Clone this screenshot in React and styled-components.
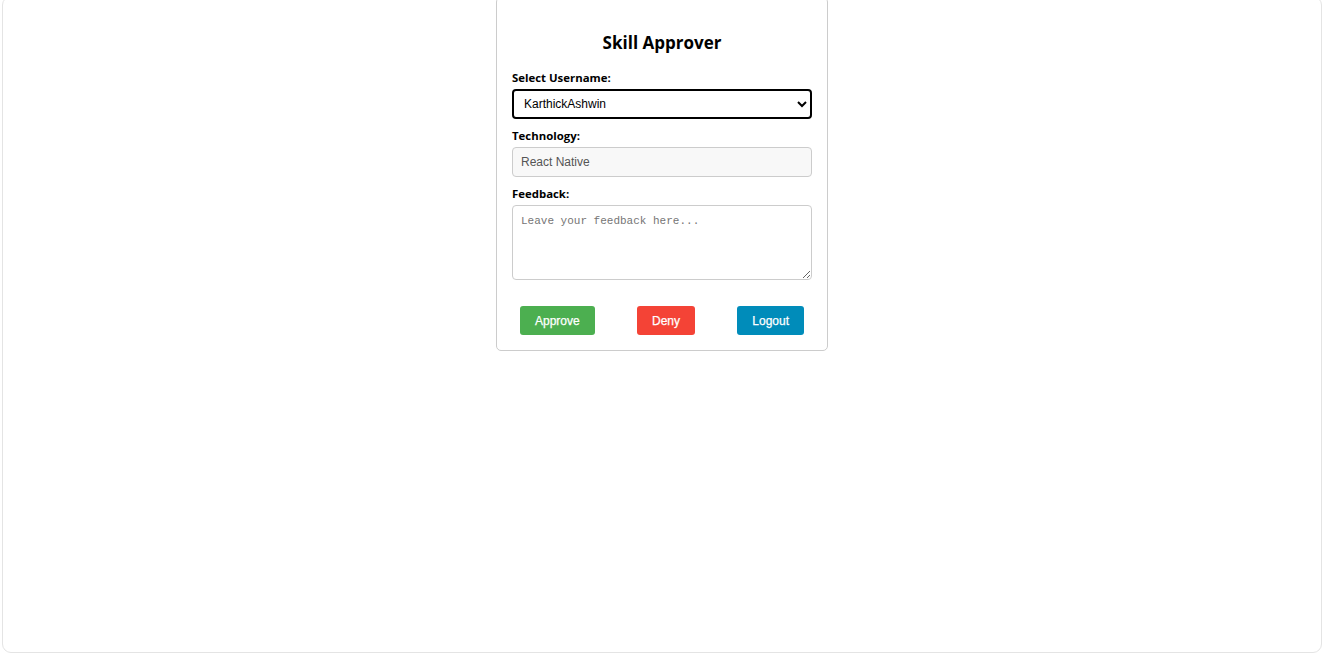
import React, { useState } from "react";
import styled, { createGlobalStyle } from "styled-components";

const Global = createGlobalStyle`
  html, body { margin: 0; padding: 0; background: #ffffff; overflow: hidden; }
  * { box-sizing: border-box; }
`;

const Frame = styled.div`
  margin: -4px 5px 0 2px;
  height: 657px;
  background: #fff;
  border: 1px solid #e4e4e4;
  border-radius: 9px;
  display: flex;
  justify-content: center;
  align-items: flex-start;
`;

const Card = styled.div`
  width: 332px;
  border: 1px solid #cccccc;
  border-radius: 5px;
  padding: 19px 15px 15px;
  background: #fff;
  display: flex;
  flex-direction: column;
`;

const Title = styled.h2`
  margin: 14px 0 14px;
  text-align: center;
  font-family: "Open Sans", "Noto Sans", sans-serif;
  font-size: 17px;
  line-height: 24px;
  font-weight: 700;
  color: #000;
`;

const Label = styled.label`
  font-family: "Open Sans", "Noto Sans", sans-serif;
  font-size: 11.4px;
  font-weight: 700;
  line-height: 16px;
  color: #000;
  padding-top: 1px;
  margin-bottom: 3px;
`;

const Select = styled.select`
  height: 30px;
  width: 100%;
  border: 2px solid #000;
  border-radius: 4px;
  padding: 0 4px 0 6px;
  font-family: "Liberation Sans", Arial, sans-serif;
  font-size: 12px;
  color: #000;
  background: #fff;
  margin-bottom: 8px;
  outline: none;
`;

const Input = styled.input`
  height: 30px;
  width: 100%;
  border: 1px solid #cccccc;
  border-radius: 4px;
  padding: 0 8px;
  background: #f8f8f8;
  font-family: "Liberation Sans", Arial, sans-serif;
  font-size: 12px;
  color: #555;
  margin-bottom: 8px;
`;

const TextArea = styled.textarea`
  height: 75px;
  width: 100%;
  border: 1px solid #cccccc;
  border-radius: 4px;
  padding: 9px 8px 7px;
  font-family: "Liberation Mono", "DejaVu Sans Mono", monospace;
  font-size: 11px;
  resize: vertical;
  &::placeholder { color: #757575; }
`;

const Actions = styled.div`
  display: flex;
  justify-content: space-between;
  padding: 0 8px;
  margin-top: 26px;
`;

const Button = styled.button`
  height: 29px;
  padding: 0 15px;
  border: none;
  border-radius: 3px;
  background: ${(p) => p.$bg};
  color: #fff;
  font-family: "Liberation Sans", Arial, sans-serif;
  font-size: 12px;
  font-weight: 400;
  -webkit-text-stroke: 0.25px #fff;
  cursor: pointer;
`;

export default function App() {
  const [user, setUser] = useState("KarthickAshwin");
  return (
    <>
      <Global />
      <Frame>
        <Card>
          <Title>Skill Approver</Title>
          <Label>Select Username:</Label>
          <Select value={user} onChange={(e) => setUser(e.target.value)}>
            <option>KarthickAshwin</option>
          </Select>
          <Label>Technology:</Label>
          <Input readOnly value="React Native" />
          <Label>Feedback:</Label>
          <TextArea placeholder="Leave your feedback here..." />
          <Actions>
            <Button $bg="#4caf50">Approve</Button>
            <Button $bg="#f44336">Deny</Button>
            <Button $bg="#008cba">Logout</Button>
          </Actions>
        </Card>
      </Frame>
    </>
  );
}
